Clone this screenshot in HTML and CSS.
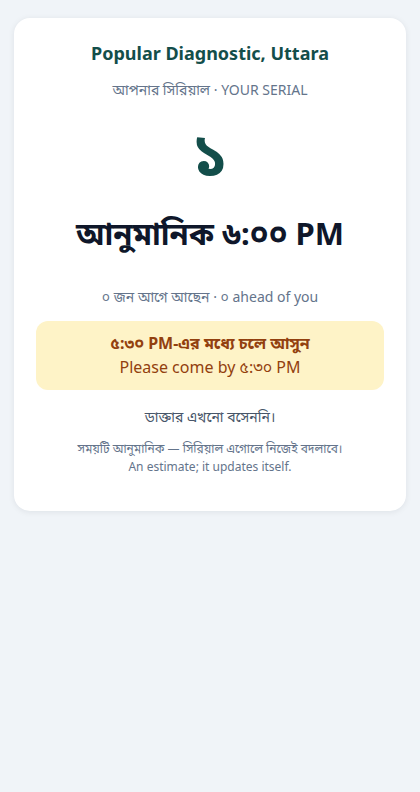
FILE: index.html
```html
<!DOCTYPE html>
<html lang="bn">

<head>
    <meta charset="UTF-8">
    <meta name="viewport" content="width=device-width, initial-scale=1.0">
    <title>Your Serial</title>
    <link rel="stylesheet" href="styles.css">
</head>

<body>
    <div class="card">
        <h1 class="clinic">Popular Diagnostic, Uttara</h1>
        <div class="label">আপনার সিরিয়াল · YOUR SERIAL</div>

        <!-- Serial number -->
        <div class="serial">১</div>

        <!-- Estimated time -->
        <div class="eta">আনুমানিক ৬:০০ PM</div>

        <div class="ahead">০ জন আগে আছেন · ০ ahead of you</div>

        <!-- Arrive-by notice -->
        <div class="notice">
            <div class="notice-bn">৫:৩০ PM-এর মধ্যে চলে আসুন</div>
            <div class="notice-en">Please come by ৫:৩০ PM</div>
        </div>

        <div class="status">ডাক্তার এখনো বসেননি।</div>

        <div class="note">
            সময়টি আনুমানিক — সিরিয়াল এগোলে নিজেই বদলাবে।<br>
            An estimate; it updates itself.
        </div>
    </div>
</body>

</html>
```

FILE: styles.css
```css
body {
    font-family: 'Noto Sans', 'Noto Sans Bengali', sans-serif;
    background-color: #f0f4f8;
    margin: 0;
    padding: 18px 14px;
}

.card {
    background-color: #ffffff;
    border-radius: 16px;
    box-shadow: 0px 1px 6px rgba(15, 23, 42, 0.08);
    padding: 22px 22px 35px;
    text-align: center;
}

.clinic {
    font-size: 18px;
    font-weight: 700;
    color: #134e4a;
    margin: 0;
    line-height: 26px;
}

.label {
    font-size: 14px;
    color: #64748b;
    margin-top: 14px;
    line-height: 20px;
}

.serial {
    font-size: 60px;
    font-weight: 700;
    color: #134e4a;
    line-height: 80px;
    margin-top: 12px;
}

.eta {
    font-size: 31px;
    font-weight: 700;
    color: #0f172a;
    line-height: 44px;
    margin-top: 19px;
}

.ahead {
    font-size: 14px;
    color: #64748b;
    margin-top: 31px;
    line-height: 22px;
}

.notice {
    background-color: #fef3c7;
    border-radius: 12px;
    padding: 10px 12px 11px;
    margin-top: 13px;
}

.notice-bn {
    font-size: 16px;
    font-weight: 700;
    color: #92400e;
    line-height: 24px;
}

.notice-en {
    font-size: 16px;
    color: #92400e;
    line-height: 24px;
}

.status {
    font-size: 14px;
    color: #475569;
    margin-top: 16px;
    line-height: 22px;
}

.note {
    font-size: 12px;
    color: #64748b;
    margin-top: 12px;
    line-height: 18px;
}
```
